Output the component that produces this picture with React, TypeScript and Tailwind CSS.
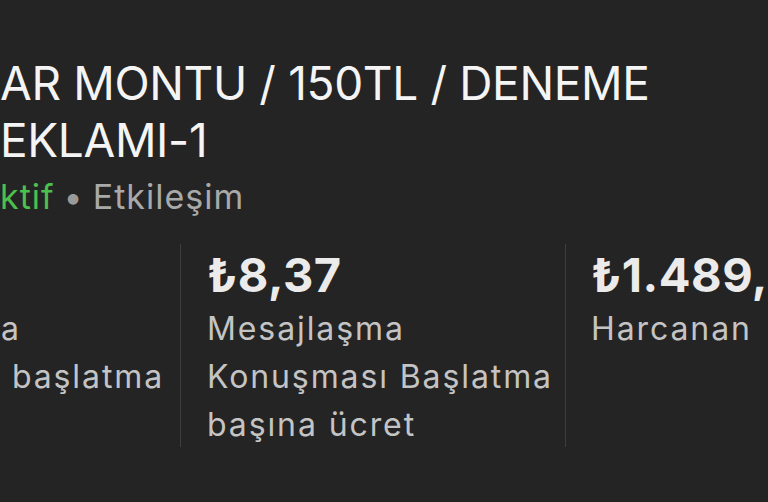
import React from "react"

const stats = [
    { value: "", lines: ["a", "\u00a0başlatma"], width: "w-[181px]", pad: "pl-[1px]" },
    { value: "₺8,37", lines: ["Mesajlaşma", "Konuşması Başlatma", "başına ücret"], width: "w-[385px]", pad: "pl-[26px]" },
    { value: "₺1.489,", lines: ["Harcanan"], width: "flex-1", pad: "pl-[25px]" },
]

const App = () => {
    return (
        <div className="w-[768px] h-[502px] overflow-hidden bg-[#242424] font-['Inter','Roboto',sans-serif]">
            <div className="pt-[55px] text-[46px] leading-[57px] tracking-[-0.35px] text-[#f4f4f4] whitespace-nowrap">
                <div>AR MONTU / 150TL / DENEME</div>
                <div>EKLAMI-1</div>
            </div>
            <div className="mt-[6px] text-[34px] leading-[44px] tracking-[1px] whitespace-nowrap">
                <span className="text-[#4cc04f]">ktif</span>
                <span className="text-[#9a9a9a] mx-[9px]">•</span>
                <span className="text-[#a9a9a9]">Etkileşim</span>
            </div>
            <div className="mt-[25px] flex h-[203px]">
                {stats.map((s, i) => (
                    <div key={i} className={`${s.width} ${s.pad} ${i < 2 ? 'border-r border-[#3e3e3e]' : ''} whitespace-nowrap`}>
                        <div className="pt-[3px] h-[59px] text-[47px] leading-[56px] font-bold tracking-[0.5px] text-[#ebebeb]">{s.value}</div>
                        <div className="mt-[2px] text-[32px] leading-[48px] tracking-[1.9px] text-[#c4c4c4]">
                            {s.lines.map((l, j) => <div key={j}>{l}</div>)}
                        </div>
                    </div>
                ))}
            </div>
        </div>
    )
}

export default App
